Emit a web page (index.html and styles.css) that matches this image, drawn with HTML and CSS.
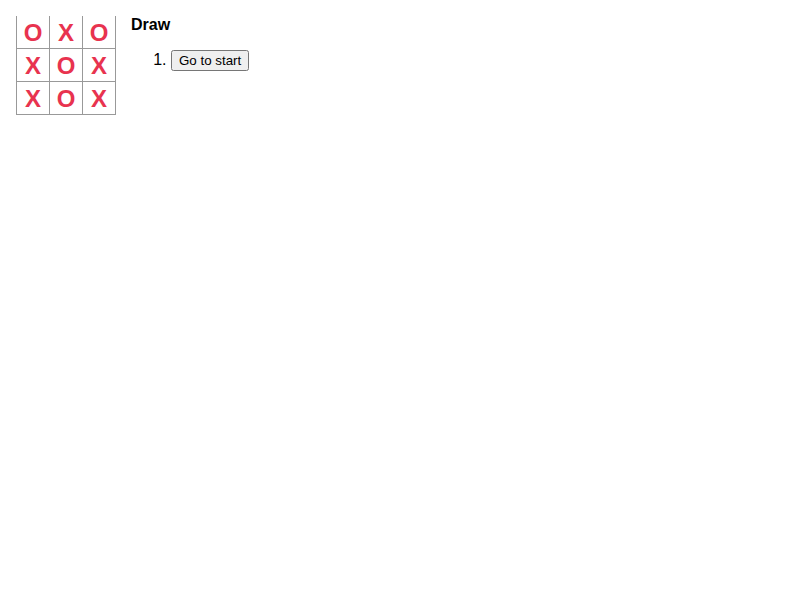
FILE: index.html
```html
<!DOCTYPE html>
<html>
<head>
<meta charset="utf-8">
<link rel="stylesheet" href="styles.css">
</head>
<body>
<div class="game">
  <div class="game-board">
    <div class="board-row">
      <button class="square">O</button><button class="square">X</button><button class="square">O</button>
    </div>
    <div class="board-row">
      <button class="square">X</button><button class="square">O</button><button class="square">X</button>
    </div>
    <div class="board-row">
      <button class="square">X</button><button class="square">O</button><button class="square">X</button>
    </div>
  </div>
  <div class="game-info">
    <div class="status">Draw</div>
    <ol class="moves">
      <li><button class="move">Go to start</button></li>
    </ol>
  </div>
</div>
</body>
</html>
```

FILE: styles.css
```css
body {
  margin: 16px;
  font-family: "Liberation Sans", Arial, sans-serif;
  font-size: 16px;
  color: #000;
  background: #fff;
}
.game {
  display: flex;
  flex-direction: row;
  align-items: flex-start;
}
.game-board {
  display: flex;
  flex-direction: column;
}
.board-row {
  display: flex;
}
.square {
  background: #fff;
  border: 1px solid #999;
  font-family: "Liberation Sans", Arial, sans-serif;
  font-size: 24px;
  font-weight: bold;
  line-height: 34px;
  height: 34px;
  width: 34px;
  margin: -1px -1px 0 0;
  padding: 0;
  text-align: center;
  color: #e8334f;
}
.game-info {
  margin-left: 16px;
}
.status {
  font-weight: bold;
}
.moves {
  margin: 16px 0 0 0;
  padding-left: 40px;
}
.move {
  font-family: "Liberation Sans", Arial, sans-serif;
  font-size: 13.333px;
}
```
